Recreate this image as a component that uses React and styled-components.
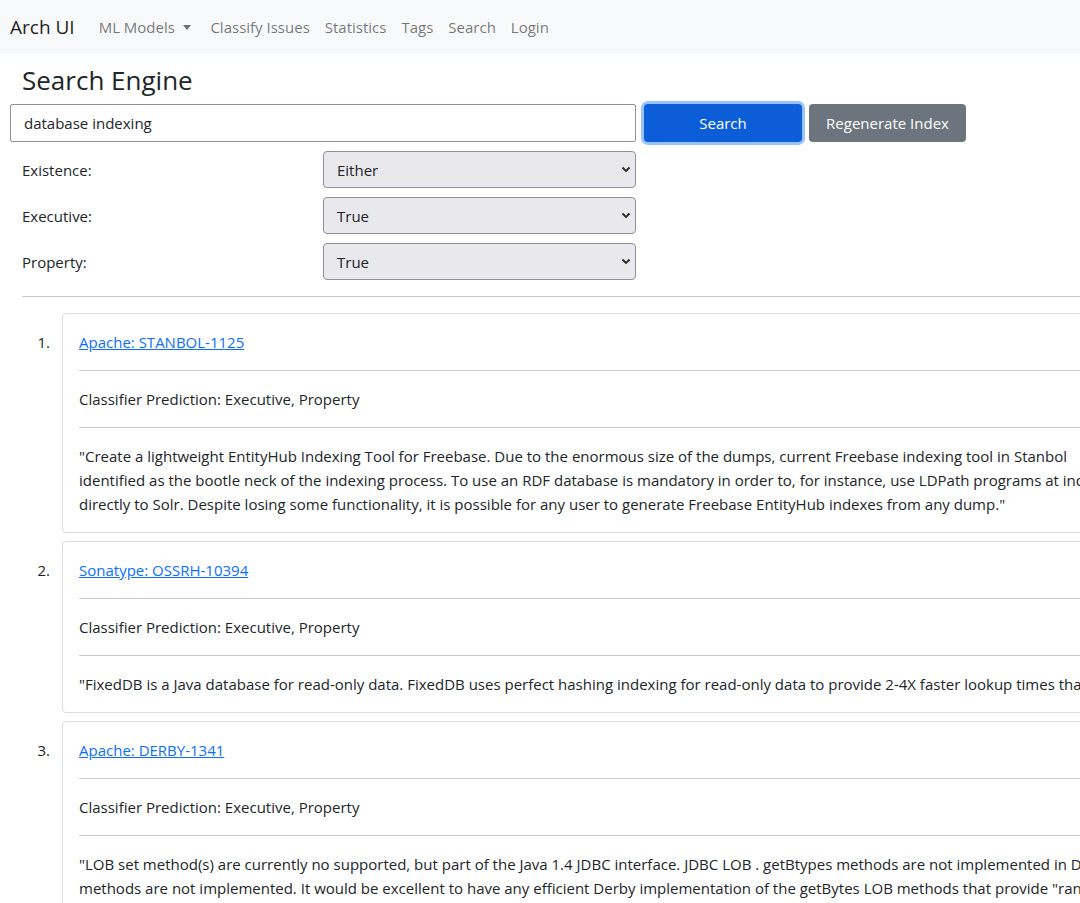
import React from 'react';
import styled, { createGlobalStyle } from 'styled-components';

const GlobalStyle = createGlobalStyle`
  html, body {
    margin: 0;
    padding: 0;
    overflow-x: hidden;
    background: #fff;
  }
  body {
    font-family: "Open Sans", "Noto Sans", sans-serif;
    font-size: 15px;
    line-height: 24px;
    color: #212529;
  }
  * { box-sizing: border-box; }
`;

const Navbar = styled.nav`
  height: 54px;
  background-color: #f8f9fa;
  display: flex;
  align-items: center;
  padding: 0 10px;
`;

const Brand = styled.a`
  font-size: 19px;
  color: rgba(0, 0, 0, 0.9);
  margin-right: 16.5px;
  text-decoration: none;
`;

const NavLink = styled.a`
  padding: 0 7.5px;
  color: rgba(0, 0, 0, 0.55);
  text-decoration: none;

  ${props => props.dropdown && `
    padding-right: 12px;
    &::after {
      content: '';
      display: inline-block;
      margin-left: 8px;
      vertical-align: 3px;
      border-top: 5px solid;
      border-left: 4.5px solid transparent;
      border-right: 4.5px solid transparent;
    }
  `}
`;

const Main = styled.main`
  width: 1500px;
  padding: 0 10px;
`;

const Title = styled.h3`
  margin: 10px 0 8px 12px;
  font-size: 26px;
  line-height: 32px;
  font-weight: 400;
  color: #212529;
`;

const SearchRow = styled.div`
  display: flex;
  align-items: center;
  height: 38px;
`;

const SearchInput = styled.input`
  width: 626px;
  height: 38px;
  border: 1px solid #8f8f9d;
  border-radius: 2px;
  padding: 0 13px;
  font: inherit;
  color: #212529;
  outline: none;
`;

const Button = styled.button`
  height: 38px;
  width: ${props => props.w}px;
  margin-left: ${props => props.gap}px;
  border: none;
  border-radius: 4px;
  color: #fff;
  font: inherit;
  background-color: ${props => props.variant === 'primary' ? '#0b5ed7' : '#6c757d'};
  box-shadow: ${props => props.focused ? '0 0 0 3px rgba(49, 132, 253, 0.5)' : 'none'};
`;

const Filters = styled.div`
  display: flex;
  flex-direction: column;
  gap: 9px;
  margin-top: 9px;
`;

const FilterRow = styled.div`
  display: flex;
  align-items: center;
`;

const Label = styled.label`
  width: 313px;
  padding-left: 12px;
`;

const SelectWrap = styled.div`
  position: relative;
  width: 313px;
  height: 37px;
`;

const Select = styled.select`
  appearance: none;
  width: 100%;
  height: 100%;
  background: #e9e9ed;
  border: 1px solid #8f8f9d;
  border-radius: 4px;
  padding: 0 13px;
  font: inherit;
  color: #212529;
`;

const Chevron = styled.svg`
  position: absolute;
  right: 5px;
  top: 15px;
  pointer-events: none;
`;

const Divider = styled.hr`
  margin: 16px 0 16px 12px;
  border: 0;
  border-top: 1px solid #c8c9ca;
`;

const ResultList = styled.ol`
  list-style: none;
  margin: 0 0 0 12px;
  padding: 0;
`;

const ResultItem = styled.li`
  display: flex;
  margin-bottom: 8px;
`;

const Num = styled.span`
  width: 40px;
  flex-shrink: 0;
  text-align: right;
  padding-right: 12px;
  padding-top: 17px;
`;

const Card = styled.div`
  flex: 1;
  border: 1px solid #dcdcdc;
  border-radius: 4px;
  padding: 16px;
`;

const IssueLink = styled.a`
  color: #0d6efd;
  text-decoration: underline;
`;

const CardRule = styled.hr`
  margin: 16px 0;
  border: 0;
  border-top: 1px solid #c8c9ca;
`;

const Description = styled.div`
  white-space: nowrap;
`;

const results = [
  {
    title: 'Apache: STANBOL-1125',
    prediction: 'Executive, Property',
    lines: [
      '"Create a lightweight EntityHub Indexing Tool for Freebase. Due to the enormous size of the dumps, current Freebase indexing tool in Stanbol',
      'identified as the bootle neck of the indexing process. To use an RDF database is mandatory in order to, for instance, use LDPath programs at indexing time.',
      'directly to Solr. Despite losing some functionality, it is possible for any user to generate Freebase EntityHub indexes from any dump."',
    ],
  },
  {
    title: 'Sonatype: OSSRH-10394',
    prediction: 'Executive, Property',
    lines: [
      '"FixedDB is a Java database for read-only data. FixedDB uses perfect hashing indexing for read-only data to provide 2-4X faster lookup times than"',
    ],
  },
  {
    title: 'Apache: DERBY-1341',
    prediction: 'Executive, Property',
    lines: [
      '"LOB set method(s) are currently no supported, but part of the Java 1.4 JDBC interface. JDBC LOB . getBtypes methods are not implemented in Derby and the',
      'methods are not implemented. It would be excellent to have any efficient Derby implementation of the getBytes LOB methods that provide "random access"',
      'to the binary / character content of database large objects."',
    ],
  },
];

const filters = [
  { label: 'Existence:', value: 'Either' },
  { label: 'Executive:', value: 'True' },
  { label: 'Property:', value: 'True' },
];

const App = () => {
  return (
    <>
      <GlobalStyle />
      <Navbar>
        <Brand href="#">Arch UI</Brand>
        <NavLink href="#" dropdown>ML Models</NavLink>
        <NavLink href="#">Classify Issues</NavLink>
        <NavLink href="#">Statistics</NavLink>
        <NavLink href="#">Tags</NavLink>
        <NavLink href="#">Search</NavLink>
        <NavLink href="#">Login</NavLink>
      </Navbar>
      <Main>
        <Title>Search Engine</Title>
        <SearchRow>
          <SearchInput defaultValue="database indexing" />
          <Button variant="primary" focused w={158} gap={8}>Search</Button>
          <Button w={157} gap={7}>Regenerate Index</Button>
        </SearchRow>
        <Filters>
          {filters.map(f => (
            <FilterRow key={f.label}>
              <Label>{f.label}</Label>
              <SelectWrap>
                <Select defaultValue={f.value}>
                  <option>Either</option>
                  <option>True</option>
                  <option>False</option>
                </Select>
                <Chevron width="10" height="7" viewBox="0 0 10 7">
                  <polyline points="1.5,1.5 5,5 8.5,1.5" fill="none" stroke="#2b2b2b" strokeWidth="1.8" />
                </Chevron>
              </SelectWrap>
            </FilterRow>
          ))}
        </Filters>
        <Divider />
        <ResultList>
          {results.map((r, i) => (
            <ResultItem key={r.title}>
              <Num>{i + 1}.</Num>
              <Card>
                <IssueLink href="#">{r.title}</IssueLink>
                <CardRule />
                <div>Classifier Prediction: {r.prediction}</div>
                <CardRule />
                <Description>
                  {r.lines.map((line, j) => (
                    <div key={j}>{line}</div>
                  ))}
                </Description>
              </Card>
            </ResultItem>
          ))}
        </ResultList>
      </Main>
    </>
  );
};

export default App;
